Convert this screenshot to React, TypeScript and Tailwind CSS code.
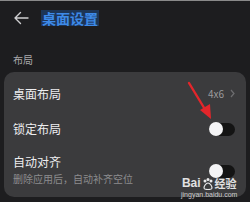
import React from "react";

const font = { fontFamily: '"Noto Sans CJK SC", "Noto Sans", sans-serif' };

function Toggle() {
  return (
    <div className="relative h-[13px] w-[26px] rounded-full bg-[#141414]">
      <div className="absolute left-0 top-[-0.5px] h-[14px] w-[14px] rounded-full bg-[#f4f4f6]" />
    </div>
  );
}

export default function App() {
  return (
    <div
      className="relative h-[202px] w-[250px] overflow-hidden border-t border-[#8a8a8a] bg-[#1d1d1f]"
      style={font}
    >
      <div className="flex h-[33px] items-center pl-[13px]">
        <svg width="16" height="14" viewBox="0 0 16 14" fill="none" stroke="#cfcfd1" strokeWidth="1.4" strokeLinecap="round" strokeLinejoin="round">
          <path d="M15 7H2M7.5 1.5 2 7l5.5 5.5" />
        </svg>
        <span className="ml-[12px] bg-[#1d3556] px-[1px] text-[14px] font-bold leading-[16px] text-[#3d8ae8]">
          桌面设置
        </span>
      </div>
      <div className="pl-[13px] pt-[19px] text-[10px] leading-[14px] text-[#a9a9ab]">布局</div>
      <div className="mx-[4px] mt-[5px] h-[125px] rounded-[10px] bg-[#3b3b3d] px-[9px]">
        <div className="flex h-[42px] items-center pt-[1px]">
          <span className="flex-1 text-[12px] text-[#ededef]">桌面布局</span>
          <span className="text-[10px] text-[#9a9a9c]">4x6</span>
          <svg className="ml-[6px] mr-[2px]" width="5" height="9" viewBox="0 0 5 9" fill="none" stroke="#6e6e70" strokeWidth="1.2">
            <path d="M1 1l3 3.5L1 8" />
          </svg>
        </div>
        <div className="flex h-[30px] items-center">
          <span className="flex-1 text-[12px] text-[#ededef]">锁定布局</span>
          <div className="mr-[2px]">
            <Toggle />
          </div>
        </div>
        <div className="flex items-center pt-[10px]">
          <div className="flex-1">
            <div className="text-[12px] leading-[16px] text-[#ededef]">自动对齐</div>
            <div className="mt-[2px] text-[10px] leading-[14px] text-[#8c8c8e]">删除应用后，自动补齐空位</div>
          </div>
          <div className="mr-[2px] mt-[2px]">
            <Toggle />
          </div>
        </div>
      </div>

      <svg className="absolute left-[184px] top-[78px]" width="34" height="44" viewBox="0 0 34 44">
        <path d="M5 4 L22 32" stroke="#e3262b" strokeWidth="2.4" strokeLinecap="round" />
        <path d="M27 40 L16 31 L26 25 Z" fill="#e3262b" />
      </svg>

      <div className="absolute left-[181px] top-[176px] flex flex-col items-center text-white/85">
        <div className="flex items-center text-[12px] font-bold leading-[13px]">
          <span style={{ fontFamily: '"Liberation Sans", sans-serif' }}>Bai</span>
          <svg width="12" height="12" viewBox="0 0 12 12" className="mx-[1px]" fill="#e8e8ea">
            <circle cx="3" cy="3" r="1.5" />
            <circle cx="6" cy="1.6" r="1.5" />
            <circle cx="9" cy="3" r="1.5" />
            <path d="M6 5c-2 0-4 3-4 5 0 1.3 1.5 1.5 4 1.5s4-.2 4-1.5c0-2-2-5-4-5z" fill="none" stroke="#e8e8ea" strokeWidth="1.2" />
          </svg>
          <span className="text-[11px]">经验</span>
        </div>
        <div className="text-[7px] leading-[10px] text-white/75" style={{ fontFamily: '"Liberation Sans", sans-serif' }}>
          jingyan.baidu.com
        </div>
      </div>
    </div>
  );
}
